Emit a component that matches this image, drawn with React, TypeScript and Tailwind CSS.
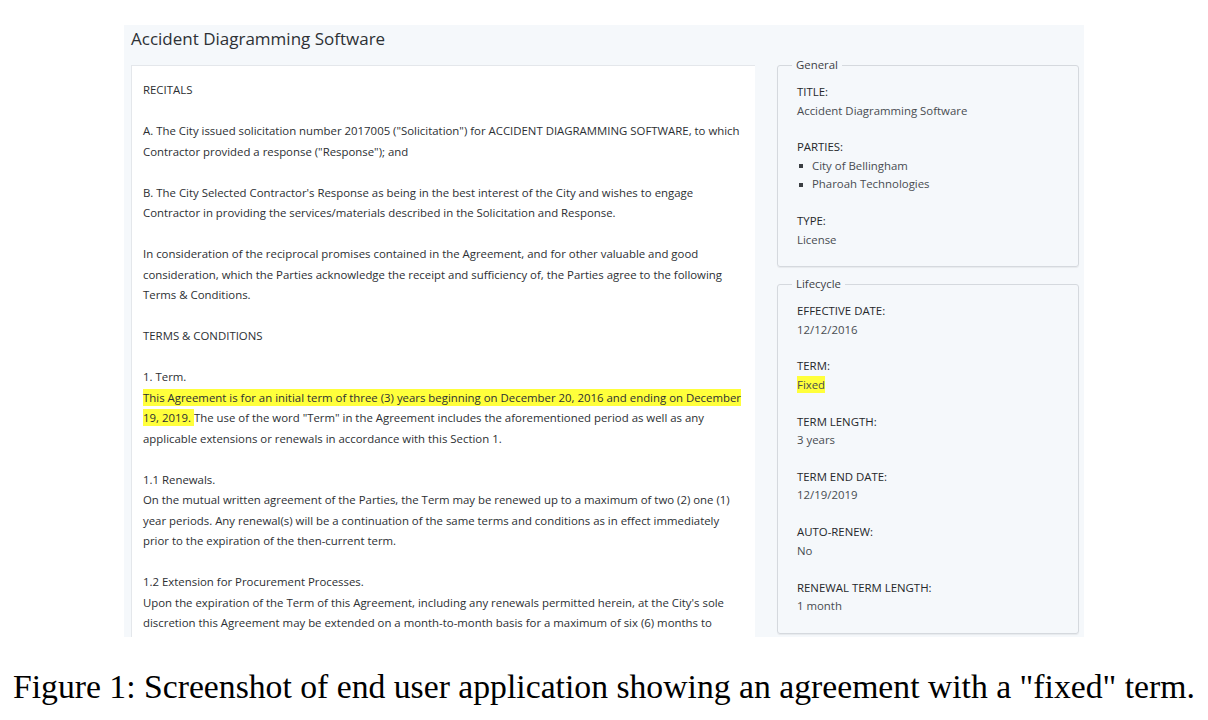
import React from 'react';

const docFont = "font-['Open_Sans','Noto_Sans',sans-serif]";

function Field({ label, children, first }: { label: string; children: React.ReactNode; first?: boolean }) {
  return (
    <div className={first ? '' : 'mt-[18.3px]'}>
      <div className="font-medium text-[#25282b]">{label}</div>
      <div className="text-[#484c51]">{children}</div>
    </div>
  );
}

function Panel({ title, children, grow }: { title: string; children: React.ReactNode; grow?: boolean }) {
  return (
    <fieldset
      className={`border border-[#d5d9de] rounded-[3px] pl-[19px] pr-3 pt-[9px] pb-[17px] shadow-[0_1px_1px_rgba(0,0,0,0.06)] ${
        grow ? 'flex-1' : ''
      }`}
    >
      <legend className="-ml-[5px] px-[4px] leading-[18px] text-[#3d4146]">{title}</legend>
      {children}
    </fieldset>
  );
}

export default function App() {
  return (
    <div className="w-[1208px] h-[720px] bg-white overflow-hidden">
      <div className={`ml-[124px] mt-[25px] w-[960px] h-[612px] bg-[#f5f8fb] flex flex-col ${docFont}`}>
        {/* Header */}
        <div className="h-[31px] pl-[7px] pt-[3px] text-[17px] leading-[22px] text-[#2d3135]">
          Accident Diagramming Software
        </div>

        {/* Body */}
        <div className="flex-1 min-h-0 flex gap-[22px] pl-[7px] pr-[5px]">
          {/* Agreement text */}
          <div className="mt-[9px] w-[624px] bg-white border-t border-l border-[#e4e7eb] overflow-hidden px-[11px] pt-[14px] text-[11.4px] leading-[20.5px] text-[#2c2f33] whitespace-nowrap">
            <div className="space-y-[20.5px]">
              <p>RECITALS</p>
              <p>
                A. The City issued solicitation number 2017005 ("Solicitation") for ACCIDENT DIAGRAMMING SOFTWARE, to which
                <br />
                Contractor provided a response ("Response"); and
              </p>
              <p>
                B. The City Selected Contractor's Response as being in the best interest of the City and wishes to engage
                <br />
                Contractor in providing the services/materials described in the Solicitation and Response.
              </p>
              <p>
                In consideration of the reciprocal promises contained in the Agreement, and for other valuable and good
                <br />
                consideration, which the Parties acknowledge the receipt and sufficiency of, the Parties agree to the following
                <br />
                Terms &amp; Conditions.
              </p>
              <p>TERMS &amp; CONDITIONS</p>
              <p>
                1. Term.
                <br />
                <span className="bg-[#ffff3b] py-[1px]">
                  This Agreement is for an initial term of three (3) years beginning on December 20, 2016 and ending on December
                </span>
                <br />
                <span className="bg-[#ffff3b] py-[1px]">19, 2019. </span>
                The use of the word "Term" in the Agreement includes the aforementioned period as well as any
                <br />
                applicable extensions or renewals in accordance with this Section 1.
              </p>
              <p>
                1.1 Renewals.
                <br />
                On the mutual written agreement of the Parties, the Term may be renewed up to a maximum of two (2) one (1)
                <br />
                year periods. Any renewal(s) will be a continuation of the same terms and conditions as in effect immediately
                <br />
                prior to the expiration of the then-current term.
              </p>
              <p>
                1.2 Extension for Procurement Processes.
                <br />
                Upon the expiration of the Term of this Agreement, including any renewals permitted herein, at the City's sole
                <br />
                discretion this Agreement may be extended on a month-to-month basis for a maximum of six (6) months to
              </p>
            </div>
          </div>

          {/* Details */}
          <div className="w-[302px] flex flex-col gap-[8px] pb-[4px] text-[11.4px] leading-[18.5px]">
            <Panel title="General">
              <Field label="TITLE:" first>
                Accident Diagramming Software
              </Field>
              <Field label="PARTIES:">
                <ul>
                  {['City of Bellingham', 'Pharoah Technologies'].map((p) => (
                    <li key={p} className="flex items-center">
                      <span className="ml-[2px] mr-[9px] w-[4px] h-[4px] bg-[#3a3e42]" />
                      {p}
                    </li>
                  ))}
                </ul>
              </Field>
              <Field label="TYPE:">License</Field>
            </Panel>

            <Panel title="Lifecycle" grow>
              <Field label="EFFECTIVE DATE:" first>
                12/12/2016
              </Field>
              <Field label="TERM:">
                <span className="bg-[#ffff3b] py-[1px]">Fixed</span>
              </Field>
              <Field label="TERM LENGTH:">3 years</Field>
              <Field label="TERM END DATE:">12/19/2019</Field>
              <Field label="AUTO-RENEW:">No</Field>
              <Field label="RENEWAL TERM LENGTH:">1 month</Field>
            </Panel>
          </div>
        </div>
      </div>

      {/* Caption */}
      <p className="mt-[33px] ml-[13px] whitespace-nowrap font-['Liberation_Serif','Times_New_Roman',serif] text-[33.7px] leading-none text-black">
        Figure 1: Screenshot of end user application showing an agreement with a "fixed" term.
      </p>
    </div>
  );
}
